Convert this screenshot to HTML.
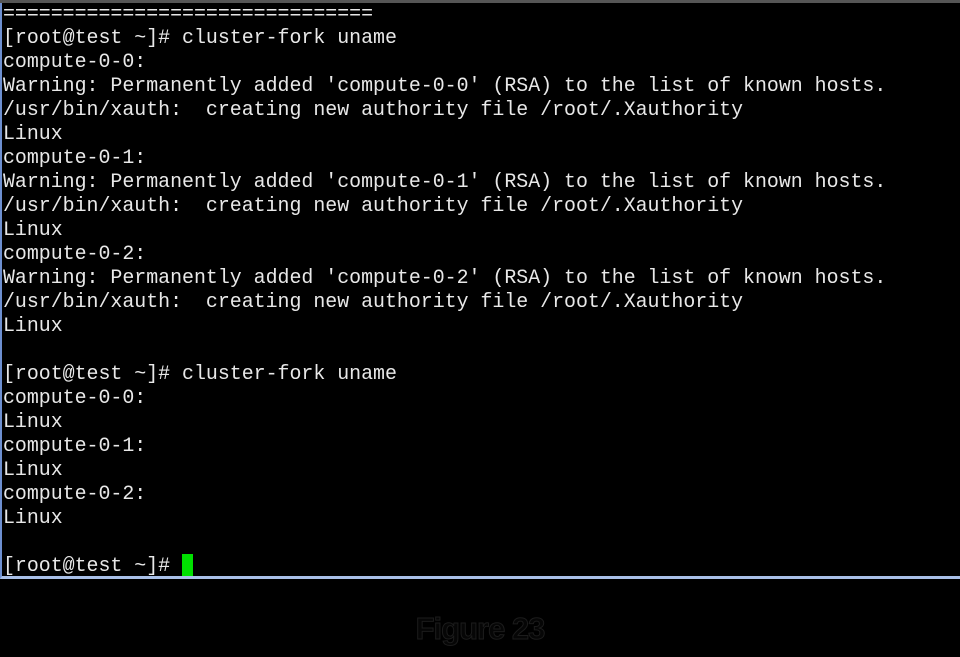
<!DOCTYPE html>
<html><head><style>
html,body{margin:0;padding:0;background:#000;width:960px;height:657px;overflow:hidden}
.term{position:absolute;left:0;top:0;width:958px;height:576px;background:#000;border-left:2px solid #6d8fd0;border-right:2px solid #6d8fd0;border-bottom:3px solid #a9c0e8;box-sizing:content-box}
.top{position:absolute;left:0;top:0;width:960px;height:3px;background:#555}
pre{margin:0;position:absolute;left:3px;top:2px;font-family:"Liberation Mono",monospace;font-size:19.9px;line-height:24px;color:#e8e8e8;}
.cur{display:inline-block;width:11px;height:22px;background:#00e000;vertical-align:-5px}
.fig{position:absolute;left:0;width:960px;top:611px;text-align:center;font-family:"Liberation Sans",sans-serif;font-size:31px;font-weight:bold;color:#060606;-webkit-text-stroke:1px #1c1c1c;letter-spacing:-1px}
</style></head><body>
<div class="term"></div><div class="top"></div>
<pre>===============================
[root@test ~]# cluster-fork uname
compute-0-0:
Warning: Permanently added 'compute-0-0' (RSA) to the list of known hosts.
/usr/bin/xauth:  creating new authority file /root/.Xauthority
Linux
compute-0-1:
Warning: Permanently added 'compute-0-1' (RSA) to the list of known hosts.
/usr/bin/xauth:  creating new authority file /root/.Xauthority
Linux
compute-0-2:
Warning: Permanently added 'compute-0-2' (RSA) to the list of known hosts.
/usr/bin/xauth:  creating new authority file /root/.Xauthority
Linux

[root@test ~]# cluster-fork uname
compute-0-0:
Linux
compute-0-1:
Linux
compute-0-2:
Linux

[root@test ~]# <span class="cur"></span></pre>
<div class="fig">Figure 23</div>
</body></html>
